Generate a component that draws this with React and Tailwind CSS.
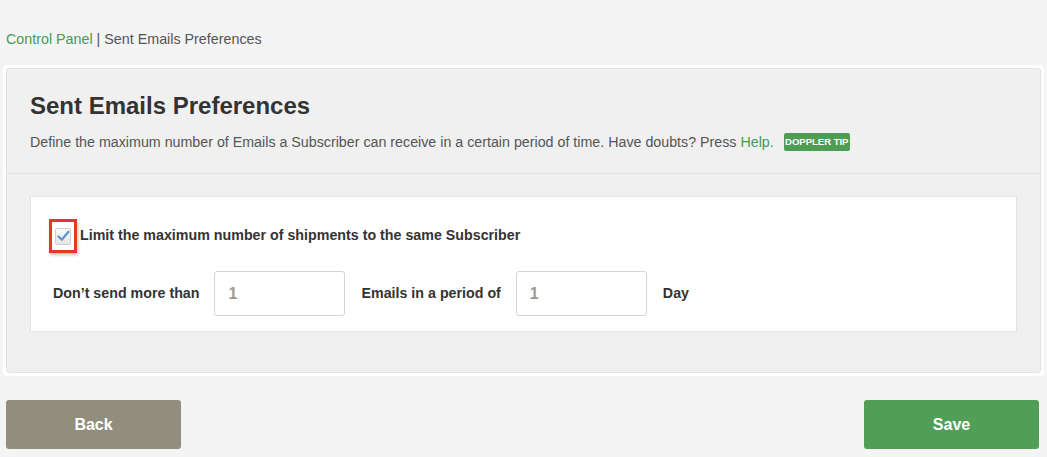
import React from "react";

const Checkbox = () => (
  <div className="flex h-[34px] w-[28px] items-center justify-center border-[3px] border-[#e5362c] shadow-[1px_2px_3px_rgba(0,0,0,0.25)]">
    <div className="flex h-[17px] w-[16px] items-center justify-center rounded-[2px] border border-[#cfcfcf] bg-gradient-to-b from-[#fafafa] to-[#e6e6e6]">
      <svg width="13" height="12" viewBox="0 0 13 12">
        <path d="M1.5 6.5 L4.8 9.8 L11.5 1.8" fill="none" stroke="#5f93c9" strokeWidth="2.2" strokeLinecap="round" strokeLinejoin="round" />
      </svg>
    </div>
  </div>
);

const NumberInput = () => (
  <input
    type="text"
    defaultValue="1"
    className="h-[45px] w-[131px] rounded-[3px] border border-[#d4d4d4] bg-white pl-[13px] text-[16px] text-[#9a9a9a] outline-none"
  />
);

export default function App() {
  return (
    <div className="min-h-screen bg-[#f4f4f4] font-['Liberation_Sans',Arial,sans-serif] text-[#333]">
      <div className="px-[6px] pt-[29px] text-[14.3px] leading-[20px] text-[#555]">
        <span className="text-[#4a9a4f]">Control Panel</span> | Sent Emails Preferences
      </div>

      <div className="mx-[3px] mt-[16px] rounded-[4px] bg-white p-[3px]">
        <div className="rounded-[3px] border border-[#e2e2e2] bg-[#f0f0f0]">
          <div className="border-b border-[#e2e2e2] px-[23px] pt-[22px] pb-[21px]">
            <h1 className="text-[24px] font-bold leading-[30px] text-[#333]">Sent Emails Preferences</h1>
            <div className="mt-[11px] flex items-center text-[14.25px] leading-[20px] text-[#555]">
              <span>
                Define the maximum number of Emails a Subscriber can receive in a certain period of time. Have doubts? Press{" "}
                <span className="text-[#4a9a4f]">Help.</span>
              </span>
              <span className="ml-[10px] flex h-[18px] w-[66px] items-center justify-center rounded-[2px] bg-[#4f9d55] text-[9.5px] font-bold text-white">
                DOPPLER TIP
              </span>
            </div>
          </div>

          <div className="px-[23px] pt-[22px] pb-[40px]">
            <div className="border border-[#e4e4e4] bg-white pl-[18px] pt-[22px] pb-[15px]">
              <div className="flex items-center gap-[3px]">
                <Checkbox />
                <span className="text-[14.25px] font-bold">Limit the maximum number of shipments to the same Subscriber</span>
              </div>
              <div className="mt-[18px] flex items-center pl-[4px] text-[14.25px] font-bold">
                <span>Don’t send more than</span>
                <div className="ml-[15px] mr-[16px]">
                  <NumberInput />
                </div>
                <span>Emails in a period of</span>
                <div className="ml-[15px] mr-[16px]">
                  <NumberInput />
                </div>
                <span>Day</span>
              </div>
            </div>
          </div>
        </div>
      </div>

      <div className="flex justify-between px-[6px] pr-[8px] pt-[24px]">
        <button className="h-[49px] w-[175px] rounded-[3px] bg-[#928e7d] text-[16px] font-bold text-white">Back</button>
        <button className="h-[49px] w-[175px] rounded-[3px] bg-[#519e58] text-[16px] font-bold text-white">Save</button>
      </div>
    </div>
  );
}
